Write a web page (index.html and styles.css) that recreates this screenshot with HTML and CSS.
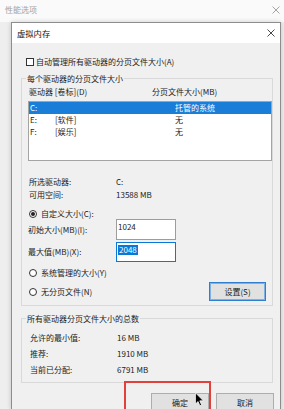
FILE: index.html
```html
<!DOCTYPE html>
<html lang="zh-CN">
<head>
<meta charset="utf-8">
<title>虚拟内存</title>
<link rel="stylesheet" href="styles.css">
</head>
<body>
<div class="screen">
  <div class="outer-title">
    <span class="outer-name">性能选项</span>
    <svg class="outer-x" width="8" height="8" viewBox="0 0 8 8"><path d="M0.5 0.5L7.5 7.5M7.5 0.5L0.5 7.5" stroke="#9a9a9a" stroke-width="0.9" fill="none"/></svg>
  </div>
  <div class="outer-body">
    <div class="dialog">
      <div class="dlg-title">
        <span class="dlg-name">虚拟内存</span>
        <svg class="dlg-x" width="8" height="8" viewBox="0 0 8 8"><path d="M0.5 0.5L7.5 7.5M7.5 0.5L0.5 7.5" stroke="#333" stroke-width="0.9" fill="none"/></svg>
      </div>
      <div class="dlg-body">
        <div class="check-row"><span class="checkbox"></span><span>自动管理所有驱动器的分页文件大小(A)</span></div>

        <fieldset class="group g1">
          <legend>每个驱动器的分页文件大小</legend>
          <div class="list-head"><span class="col-drive">驱动器 [卷标](D)</span><span class="col-size">分页文件大小(MB)</span></div>
          <div class="listbox">
            <div class="lrow sel"><span>C:</span><span></span><span>托管的系统</span></div>
            <div class="lrow"><span>E:</span><span>[软件]</span><span>无</span></div>
            <div class="lrow"><span>F:</span><span>[娱乐]</span><span>无</span></div>
          </div>
          <div class="info-row"><span class="k">所选驱动器:</span><span class="v">C:</span></div>
          <div class="info-row"><span class="k">可用空间:</span><span class="v">13588 MB</span></div>
          <div class="radio-row r-custom"><span class="radio on"></span><span>自定义大小(C):</span></div>
          <div class="field-row f1"><span class="k">初始大小(MB)(I):</span><div class="input">1024</div></div>
          <div class="field-row f2"><span class="k">最大值(MB)(X):</span><div class="input focus"><span class="seltext">2048</span></div></div>
          <div class="radio-row r-sys"><span class="radio"></span><span>系统管理的大小(Y)</span></div>
          <div class="radio-row r-none"><span class="radio"></span><span>无分页文件(N)</span><button class="btn btn-set">设置(S)</button></div>
        </fieldset>

        <fieldset class="group g2">
          <legend>所有驱动器分页文件大小的总数</legend>
          <div class="sum-row"><span class="k">允许的最小值:</span><span class="v">16 MB</span></div>
          <div class="sum-row"><span class="k">推荐:</span><span class="v">1910 MB</span></div>
          <div class="sum-row"><span class="k">当前已分配:</span><span class="v">6791 MB</span></div>
        </fieldset>

        <div class="actions">
          <button class="btn btn-ok">确定</button>
          <button class="btn btn-cancel">取消</button>
        </div>
      </div>
    </div>
  </div>
  <div class="highlight"></div>
  <svg class="cursor" width="9" height="15" viewBox="0 0 12 19"><path d="M0.6 0.6L0.6 15.6L4.1 12.2L6.5 17.9L8.8 16.9L6.4 11.3L11.2 11.3Z" fill="#000" stroke="#fff" stroke-width="1" stroke-linejoin="round"/></svg>
</div>
</body>
</html>
```

FILE: styles.css
```css
* { box-sizing: border-box; }
html, body { margin: 0; padding: 0; }
body {
  width: 284px;
  height: 409px;
  overflow: hidden;
  font-family: "Noto Sans CJK SC", "Noto Sans", sans-serif;
  font-size: 8px;
  line-height: 10px;
  color: #1b1b1b;
  background: #f0f0f0;
}
.screen { position: relative; width: 284px; height: 409px; overflow: hidden; }

.outer-title {
  height: 22px;
  background: #fafafa;
  display: flex;
  align-items: center;
  justify-content: space-between;
  padding: 0 4px 2px 5px;
  color: #a3a3a3;
}
.outer-x { display: block; }
.outer-body {
  height: 387px;
  background: #eeeeee;
  padding-left: 11px;
}

.dialog {
  width: 270px;
  height: 388px;
  border: 1px solid #8d8d8d;
  border-bottom: none;
  background: #f0f0f0;
  box-shadow: 0 0 5px rgba(0, 0, 0, 0.18);
}
.dlg-title {
  height: 20px;
  background: #ffffff;
  display: flex;
  align-items: center;
  justify-content: space-between;
  padding: 0 5px 0 5px;
  font-size: 8.3px;
  color: #111;
}
.dlg-x { display: block; }

.dlg-body { padding: 13px 6px 0 9px; }

.check-row {
  height: 12px;
  display: flex;
  align-items: center;
  gap: 2px;
  margin-left: 5px;
}
.checkbox {
  width: 8px;
  height: 8px;
  border: 1px solid #333;
  background: #fff;
}

.group {
  width: 252px;
  margin: 0;
  padding: 0;
  border: 1px solid #d9d9d9;
  min-width: 0;
}
.group legend {
  margin-left: 4px;
  padding: 0 1px;
  line-height: 11px;
  height: 11px;
}
.g1 { margin-top: 5px; padding-bottom: 4px; }
.g2 { margin-top: 7px; padding-bottom: 4px; }

.list-head {
  margin-top: 3px;
  height: 10px;
  display: flex;
  padding-left: 7px;
}
.col-drive { width: 123px; }

.listbox {
  margin: 4px 0 0 6px;
  width: 244px;
  height: 60px;
  border: 1px solid #a4a4a4;
  background: #fff;
}
.lrow {
  height: 12px;
  display: grid;
  grid-template-columns: 25px 120px 1fr;
  align-items: center;
  padding-left: 1px;
}
.lrow.sel { background: #1a7dd7; color: #fff; }

.info-row {
  height: 13px;
  display: flex;
  align-items: center;
  padding-left: 7px;
}
.info-row:first-of-type { margin-top: 14px; }
.listbox + .info-row { margin-top: 14px; }
.info-row .k { width: 87px; }

.radio-row {
  display: flex;
  align-items: center;
  gap: 4px;
  padding-left: 7px;
}
.radio {
  width: 8px;
  height: 8px;
  border: 1px solid #333;
  border-radius: 50%;
  background: #fff;
  display: flex;
  align-items: center;
  justify-content: center;
}
.radio.on::after {
  content: "";
  width: 4px;
  height: 4px;
  border-radius: 50%;
  background: #222;
}
.r-custom { margin-top: 8px; height: 10px; }
.r-sys { margin-top: 5px; height: 12px; }
.r-none { margin-top: 3px; height: 19px; padding-right: 6px; }

.field-row {
  display: flex;
  align-items: center;
  padding-left: 6px;
}
.field-row .k { width: 88px; }
.f1 { height: 21px; }
.f2 { margin-top: 2px; height: 20px; }
.f1 .k { padding-top: 1px; }
.input {
  width: 60px;
  height: 100%;
  border: 1px solid #9d9d9d;
  background: #fff;
  padding: 2px 0 0 1px;
  align-self: stretch;
}
.input.focus { border-color: #0a78d7; }
.seltext {
  display: inline-block;
  background: #0a78d7;
  color: #fff;
  padding: 0 1px;
}

.btn {
  font: inherit;
  color: #1b1b1b;
  background: #e1e1e1;
  border: 1px solid #adadad;
  padding: 0;
  margin: 0;
  width: 58px;
  height: 20px;
  line-height: 10px;
}
.btn-set {
  margin-left: auto;
  width: 57px;
  height: 19px;
  border: 1px solid #2e7fd0;
  box-shadow: inset 0 0 0 1px #7fb2e3;
}

.sum-row {
  height: 16px;
  display: flex;
  align-items: center;
  padding-left: 8px;
}
.g2 legend + .sum-row { margin-top: 6px; }
.sum-row .k { width: 87px; }

.actions {
  margin-top: 10px;
  display: flex;
  justify-content: flex-end;
  gap: 7px;
}

.highlight {
  position: absolute;
  left: 124px;
  top: 381px;
  width: 87px;
  height: 40px;
  border: 2px solid #e2403b;
}
.cursor {
  position: absolute;
  left: 195px;
  top: 392px;
}
```
